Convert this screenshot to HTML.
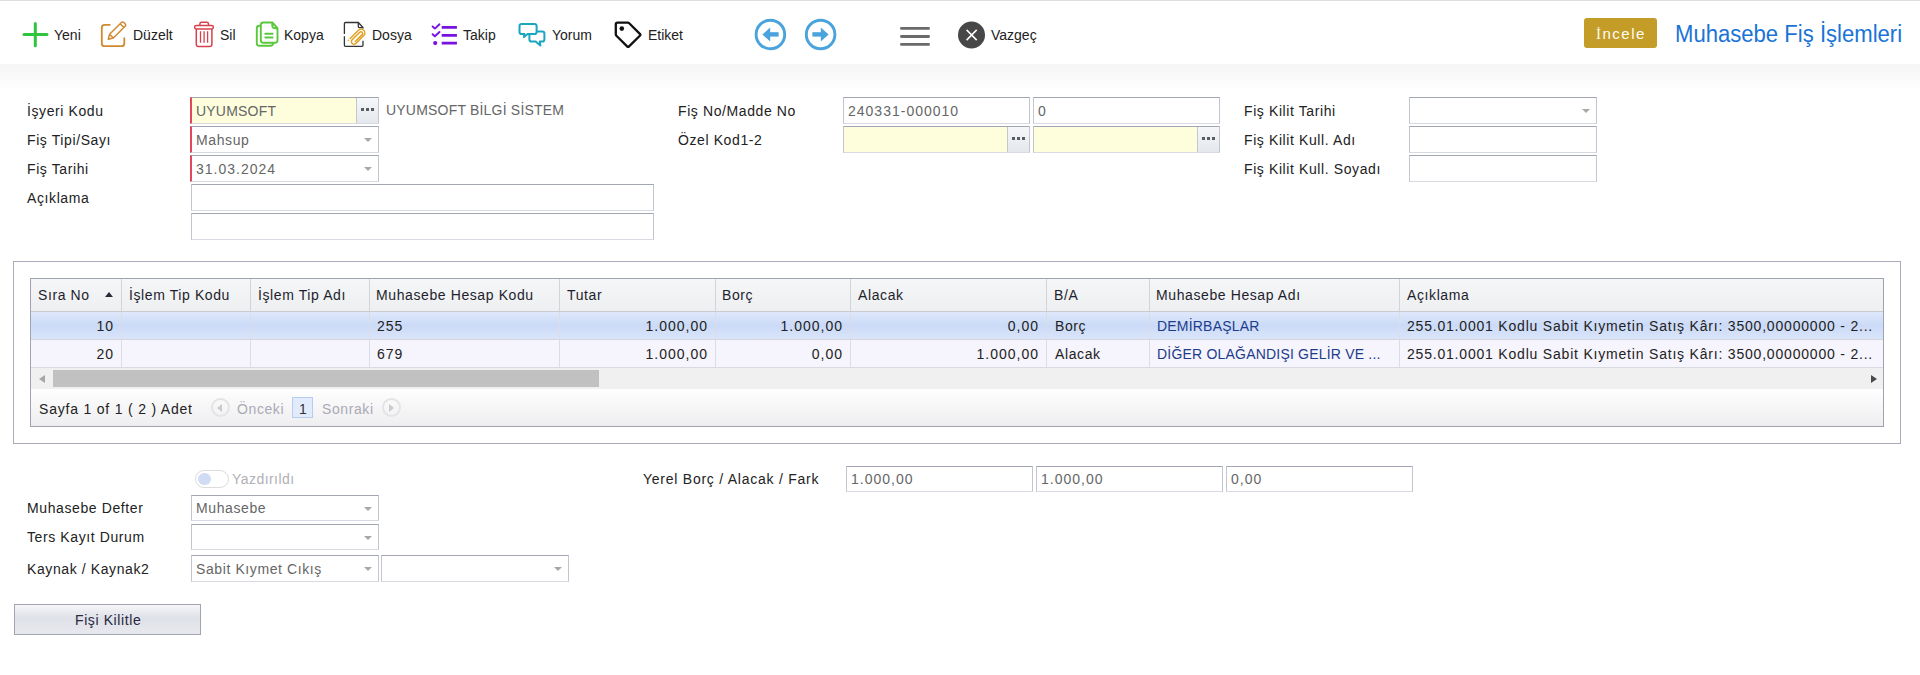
<!DOCTYPE html>
<html><head><meta charset="utf-8">
<style>
*{margin:0;padding:0}
html,body{width:1920px;height:675px;overflow:hidden;background:#fff}
body{position:relative;font-family:"Liberation Sans",sans-serif;font-size:13px;color:#222}
.a{position:absolute}
.t{position:absolute;line-height:14px;font-size:14px;white-space:nowrap;letter-spacing:.6px}
.num{letter-spacing:1px !important}
.n8{letter-spacing:.8px !important}
.up{letter-spacing:.2px !important}
.tb{position:absolute;line-height:14px;white-space:nowrap;font-size:14px;color:#222}
.box{position:absolute;box-sizing:border-box;height:27px;border:1px solid #c3c6d0;border-top-color:#a2a6b2;border-bottom-color:#d8dae2;background:#fff}
.req{border-left:2px solid #e2485a}
.yel{background:#fefedd}
.iv{position:absolute;left:4px;top:6px;line-height:14px;font-size:14px;color:#666;letter-spacing:.6px;white-space:nowrap}
.dd{position:absolute;right:6px;top:11px;width:0;height:0;border-left:4px solid transparent;border-right:4px solid transparent;border-top:4px solid #a8a8a8}
.btn3{position:absolute;right:0;top:0;bottom:0;width:21px;border-left:1px solid #c2c6ce;background:linear-gradient(#f5f7f9,#e5e8ec)}
.btn3 i{position:absolute;top:10px;width:3px;height:3px;background:#5a5d63}
.hd{top:288px;color:#1e1e2e}
.r1,.r2{color:#222}
.r1{top:319px}.r2{top:347px}
.vs{position:absolute;width:1px;background:#d2d4da}
</style></head><body>

<!-- toolbar -->
<div class="a" style="left:0;top:0;width:1920px;height:1px;background:#dde0dd"></div>
<div class="a" style="left:0;top:64px;width:1920px;height:26px;background:linear-gradient(#f5f5f5,#fff)"></div>

<svg class="a" style="left:0;top:0" width="1100" height="64" viewBox="0 0 1100 64" fill="none">
  <!-- plus -->
  <path d="M35.3 23.5V45.8M24 34.6H47" stroke="#2fc43b" stroke-width="3" stroke-linecap="round"/>
  <!-- duzelt -->
  <path d="M109.8 24.8H104.5Q101.8 24.8 101.8 27.5V43.4Q101.8 46.1 104.5 46.1H121.6Q124.3 46.1 124.3 43.4V38.1" stroke="#d18a31" stroke-width="1.8" stroke-linecap="round"/>
  <path d="M108.3 39.3L109.6 34.3L121.4 22.5Q122.6 21.3 123.8 22.5L125.1 23.8Q126.3 25 125.1 26.2L113.3 38L108.3 39.3ZM109.6 34.3L113.3 38M120.1 23.8L123.8 27.5" stroke="#d18a31" stroke-width="1.5" stroke-linejoin="round"/>
  <!-- sil -->
  <path d="M199.9 25.2V23.9Q199.9 22.3 201.5 22.3H206.9Q208.5 22.3 208.5 23.9V25.2" stroke="#d8414b" stroke-width="1.5"/>
  <rect x="194.6" y="25.5" width="18.8" height="3.4" rx="1.7" stroke="#d8414b" stroke-width="1.5"/>
  <path d="M196.3 29V44.2Q196.3 46.5 198.6 46.5H209.6Q211.9 46.5 211.9 44.2V29" stroke="#d8414b" stroke-width="1.5"/>
  <path d="M200.5 31.2V42.7M204.1 31.2V42.7M207.6 31.2V42.7" stroke="#d8414b" stroke-width="1.3"/>
  <!-- kopya -->
  <path d="M260.4 25.7H259.3Q256.8 25.7 256.8 28.2V43.3Q256.8 45.8 259.3 45.8H270.5Q273 45.8 273 43.3V42.8" stroke="#5ac73c" stroke-width="1.9"/>
  <path d="M272.3 22.5H263.3Q260.8 22.5 260.8 25V40.3Q260.8 42.8 263.3 42.8H275Q277.5 42.8 277.5 40.3V28.2L272.3 22.5ZM272.3 22.5V25.6Q272.3 28.2 274.8 28.2H277.5" stroke="#5ac73c" stroke-width="1.9" stroke-linejoin="round"/>
  <path d="M265.3 33.7H272.6M265.3 37.5H272.6" stroke="#5ac73c" stroke-width="1.9" stroke-linecap="round"/>
  <!-- dosya -->
  <path d="M344.4 34V23.6Q344.4 22.5 345.5 22.5H358.3L363 27.6V28.4M363 40.8V45.3Q363 46.4 361.9 46.4H345.5Q344.4 46.4 344.4 45.3V36.3M358.3 22.5V26.6Q358.3 27.6 359.3 27.6H363" stroke="#333" stroke-width="1.3"/>
  <path d="M350.2 38.5L358.45 30.25A3.77 3.77 0 0 1 363.78 35.58L355.88 43.48A2.6 2.6 0 0 1 352.2 39.8L359.75 32.25A1.7 1.7 0 0 1 362.15 34.65L355.3 41.5" stroke="#e2a11f" stroke-width="1.5" stroke-linecap="round"/>
  <circle cx="348.3" cy="40.3" r="0.8" fill="#e2a11f"/>
  <!-- takip -->
  <path d="M432.6 26.5L434.9 28.6L439.5 24.3M432.6 34.2L434.9 36.3L439.5 32" stroke="#7a12df" stroke-width="1.9" stroke-linecap="round" stroke-linejoin="round"/>
  <circle cx="435.2" cy="43.1" r="2.1" fill="#7a12df"/>
  <path d="M441.7 27.4H456.9M441.7 35.4H456.9M441.7 43.1H456.9" stroke="#7a12df" stroke-width="2.9" stroke-linecap="butt"/>
  <!-- yorum -->
  <path d="M521.6 23.9H534.5Q536.6 23.9 536.6 26V31.9Q536.6 34 534.5 34H527.6L523.9 37.1L524.4 34H521.6Q519.5 34 519.5 31.9V26Q519.5 23.9 521.6 23.9Z" stroke="#1aa6be" stroke-width="2" stroke-linejoin="round"/>
  <path d="M536.9 31.5H542.3Q544.4 31.5 544.4 33.6V39.5Q544.4 41.6 542.3 41.6H539.8L540.4 45.6L535.6 41.6H531.5Q529.4 41.6 529.4 39.5V34.8" stroke="#1aa6be" stroke-width="2" stroke-linejoin="round"/>
  <!-- etiket -->
  <path d="M617.5 22.6H627.7Q628.6 22.6 629.2 23.2L640.1 34.1Q640.8 34.8 640.1 35.5L628.8 46.6Q628.1 47.3 627.4 46.6L616.4 35.8Q615.8 35.2 615.8 34.3V24.3Q615.8 22.6 617.5 22.6Z" stroke="#111" stroke-width="2.3" stroke-linejoin="round"/>
  <circle cx="621.8" cy="28.6" r="2.3" fill="#111"/>
  <!-- arrows -->
  <circle cx="770.4" cy="34.5" r="14.3" stroke="#4aa3dc" stroke-width="2.9"/>
  <path d="M762.4 34.4L770.2 27.4V41.6Z" fill="#4aa3dc"/>
  <path d="M769 34.4H778.6" stroke="#4aa3dc" stroke-width="4.4"/>
  <circle cx="820.6" cy="34.5" r="14.3" stroke="#4aa3dc" stroke-width="2.9"/>
  <path d="M828.6 34.4L820.8 27.4V41.6Z" fill="#4aa3dc"/>
  <path d="M812.4 34.4H822" stroke="#4aa3dc" stroke-width="4.4"/>
  <!-- hamburger -->
  <path d="M901.4 28.4H928.6M901.4 36.5H928.6M901.4 44.4H928.6" stroke="#6b6b6b" stroke-width="2.8" stroke-linecap="round"/>
  <!-- vazgec -->
  <circle cx="971.5" cy="35" r="13.5" fill="#474747"/>
  <path d="M966.6 29.9L976.7 40.1M976.7 29.9L966.6 40.1" stroke="#fff" stroke-width="1.5"/>
</svg>

<div class="tb" style="left:54px;top:28px">Yeni</div>
<div class="tb" style="left:133px;top:28px">Düzelt</div>
<div class="tb" style="left:220px;top:28px">Sil</div>
<div class="tb" style="left:284px;top:28px">Kopya</div>
<div class="tb" style="left:372px;top:28px">Dosya</div>
<div class="tb" style="left:463px;top:28px">Takip</div>
<div class="tb" style="left:552px;top:28px">Yorum</div>
<div class="tb" style="left:648px;top:28px">Etiket</div>
<div class="tb" style="left:991px;top:28px">Vazgeç</div>

<div class="a" style="left:1584px;top:18px;width:73px;height:30px;background:#c49c28;border-radius:3px"></div>
<div class="t" style="left:1596px;top:26px;color:#fffdf5;font-size:15px;line-height:15px;letter-spacing:1.5px"><span style="font-family:'Liberation Serif';font-size:15px">İ</span>ncele</div>
<div class="a" style="left:1675px;top:22px;font-size:23.5px;line-height:24px;color:#1a74d6;white-space:nowrap;transform:scaleX(0.94);transform-origin:0 0">Muhasebe Fiş İşlemleri</div>


<!-- form col1 -->
<div class="t" style="left:27px;top:104px">İşyeri Kodu</div>
<div class="t" style="left:27px;top:133px">Fiş Tipi/Sayı</div>
<div class="t" style="left:27px;top:162px">Fiş Tarihi</div>
<div class="t" style="left:27px;top:191px">Açıklama</div>

<div class="box req yel" style="left:190px;top:97px;width:189px"><div class="iv up">UYUMSOFT</div><div class="btn3"><i style="left:4px"></i><i style="left:9px"></i><i style="left:14px"></i></div></div>
<div class="t up" style="left:386px;top:103px;color:#666">UYUMSOFT BİLGİ SİSTEM</div>
<div class="box req" style="left:190px;top:126px;width:189px"><div class="iv">Mahsup</div><div class="dd"></div></div>
<div class="box req" style="left:190px;top:155px;width:189px"><div class="iv num">31.03.2024</div><div class="dd"></div></div>
<div class="box" style="left:191px;top:184px;width:463px"></div>
<div class="box" style="left:191px;top:213px;width:463px"></div>

<!-- form col2 -->
<div class="t" style="left:678px;top:104px">Fiş No/Madde No</div>
<div class="t" style="left:678px;top:133px">Özel Kod1-2</div>
<div class="box" style="left:843px;top:97px;width:187px"><div class="iv num">240331-000010</div></div>
<div class="box" style="left:1033px;top:97px;width:187px"><div class="iv">0</div></div>
<div class="box yel" style="left:843px;top:126px;width:187px"><div class="btn3"><i style="left:4px"></i><i style="left:9px"></i><i style="left:14px"></i></div></div>
<div class="box yel" style="left:1033px;top:126px;width:187px"><div class="btn3"><i style="left:4px"></i><i style="left:9px"></i><i style="left:14px"></i></div></div>

<!-- form col3 -->
<div class="t" style="left:1244px;top:104px">Fiş Kilit Tarihi</div>
<div class="t" style="left:1244px;top:133px">Fiş Kilit Kull. Adı</div>
<div class="t" style="left:1244px;top:162px">Fiş Kilit Kull. Soyadı</div>
<div class="box" style="left:1409px;top:97px;width:188px"><div class="dd"></div></div>
<div class="box" style="left:1409px;top:126px;width:188px"></div>
<div class="box" style="left:1409px;top:155px;width:188px"></div>


<!-- grid -->
<div class="a" style="left:13px;top:261px;width:1886px;height:181px;border:1px solid #a9acb8"></div>
<div class="a" style="left:30px;top:278px;width:1852px;height:147px;border:1px solid #9fa2af;overflow:hidden">
  <div class="a" style="left:0;top:0;width:1852px;height:32px;background:linear-gradient(#f5f6f7,#eeeff0);border-bottom:1px solid #c9cbd0"></div>
  <div class="a" style="left:0;top:33px;width:1852px;height:27px;background:linear-gradient(#dfe8fb,#cbdaf7 50%,#dae5fa);border-bottom:1px solid #d3d6de"></div>
  <div class="a" style="left:0;top:61px;width:1852px;height:27px;background:#f6f4fc;border-bottom:1px solid #d8dae0"></div>
  <div class="a" style="left:0;top:89px;width:1852px;height:21px;background:#f0f0f0"></div>
  <div class="a" style="left:22px;top:91px;width:546px;height:17px;background:#c1c1c1"></div>
  <div class="a" style="left:8px;top:96px;width:0;height:0;border-top:4.5px solid transparent;border-bottom:4.5px solid transparent;border-right:6px solid #a6a6a6"></div>
  <div class="a" style="left:1840px;top:96px;width:0;height:0;border-top:4.5px solid transparent;border-bottom:4.5px solid transparent;border-left:6px solid #4a4a4a"></div>
  <div class="a" style="left:0;top:110px;width:1852px;height:37px;background:linear-gradient(#fefefe,#eeeef0)"></div>
  <div class="vs" style="left:90px;top:0;height:32px;background:#d3d4d8"></div>
  <div class="vs" style="left:90px;top:33px;height:55px;background:#dcdde4"></div>
  <div class="vs" style="left:219px;top:0;height:32px;background:#d3d4d8"></div>
  <div class="vs" style="left:219px;top:33px;height:55px;background:#dcdde4"></div>
  <div class="vs" style="left:338px;top:0;height:32px;background:#d3d4d8"></div>
  <div class="vs" style="left:338px;top:33px;height:55px;background:#dcdde4"></div>
  <div class="vs" style="left:528px;top:0;height:32px;background:#d3d4d8"></div>
  <div class="vs" style="left:528px;top:33px;height:55px;background:#dcdde4"></div>
  <div class="vs" style="left:684px;top:0;height:32px;background:#d3d4d8"></div>
  <div class="vs" style="left:684px;top:33px;height:55px;background:#dcdde4"></div>
  <div class="vs" style="left:819px;top:0;height:32px;background:#d3d4d8"></div>
  <div class="vs" style="left:819px;top:33px;height:55px;background:#dcdde4"></div>
  <div class="vs" style="left:1015px;top:0;height:32px;background:#d3d4d8"></div>
  <div class="vs" style="left:1015px;top:33px;height:55px;background:#dcdde4"></div>
  <div class="vs" style="left:1118px;top:0;height:32px;background:#d3d4d8"></div>
  <div class="vs" style="left:1118px;top:33px;height:55px;background:#dcdde4"></div>
  <div class="vs" style="left:1368px;top:0;height:32px;background:#d3d4d8"></div>
  <div class="vs" style="left:1368px;top:33px;height:55px;background:#dcdde4"></div>
</div>
<div class="t hd" style="left:38px">Sıra No</div>
<div class="t hd" style="left:129px">İşlem Tip Kodu</div>
<div class="t hd" style="left:258px">İşlem Tip Adı</div>
<div class="t hd" style="left:376px">Muhasebe Hesap Kodu</div>
<div class="t hd" style="left:567px">Tutar</div>
<div class="t hd" style="left:722px">Borç</div>
<div class="t hd" style="left:858px">Alacak</div>
<div class="t hd" style="left:1054px">B/A</div>
<div class="t hd" style="left:1156px">Muhasebe Hesap Adı</div>
<div class="t hd" style="left:1407px">Açıklama</div>
<div class="a" style="left:105px;top:292px;width:0;height:0;border-left:4.5px solid transparent;border-right:4.5px solid transparent;border-bottom:5px solid #2a2a35"></div>
<div class="t r1 num" style="right:1806px;text-align:right">10</div>
<div class="t r1 num" style="left:377px;">255</div>
<div class="t r1 num" style="right:1212px;text-align:right">1.000,00</div>
<div class="t r1 num" style="right:1077px;text-align:right">1.000,00</div>
<div class="t r1 num" style="right:881px;text-align:right">0,00</div>
<div class="t r1 " style="left:1055px;">Borç</div>
<div class="t r1 up" style="left:1157px;color:#1c3c8c">DEMİRBAŞLAR</div>
<div class="t r1 n8" style="left:1407px;">255.01.0001 Kodlu Sabit Kıymetin Satış Kârı: 3500,00000000 - 2...</div>
<div class="t r2 num" style="right:1806px;text-align:right">20</div>
<div class="t r2 num" style="left:377px;">679</div>
<div class="t r2 num" style="right:1212px;text-align:right">1.000,00</div>
<div class="t r2 num" style="right:1077px;text-align:right">0,00</div>
<div class="t r2 num" style="right:881px;text-align:right">1.000,00</div>
<div class="t r2 " style="left:1055px;">Alacak</div>
<div class="t r2 up" style="left:1157px;color:#1c3c8c">DİĞER OLAĞANDIŞI GELİR VE ...</div>
<div class="t r2 n8" style="left:1407px;">255.01.0001 Kodlu Sabit Kıymetin Satış Kârı: 3500,00000000 - 2...</div>
<div class="t pg n8" style="left:39px;top:402px;color:#222">Sayfa 1 of 1 ( 2 ) Adet</div>
<div class="a" style="left:211px;top:398px;width:19px;height:19px;box-sizing:border-box;border:2px solid #e4e4e6;border-radius:50%"></div>
<div class="a" style="left:217px;top:404px;width:0;height:0;border-top:4px solid transparent;border-bottom:4px solid transparent;border-right:5px solid #cbcbcf"></div>
<div class="t" style="left:237px;top:402px;color:#aaaab6">Önceki</div>
<div class="a" style="left:292px;top:397px;width:21px;height:21px;box-sizing:border-box;border:1px solid #b4cdf0;background:#e2ebfc"></div>
<div class="t num" style="left:299px;top:402px;color:#333">1</div>
<div class="t" style="left:322px;top:402px;color:#aaaab6">Sonraki</div>
<div class="a" style="left:382px;top:398px;width:19px;height:19px;box-sizing:border-box;border:2px solid #e4e4e6;border-radius:50%"></div>
<div class="a" style="left:389px;top:404px;width:0;height:0;border-top:4px solid transparent;border-bottom:4px solid transparent;border-left:5px solid #cbcbcf"></div>

<!-- bottom form -->
<div class="a" style="left:195px;top:470px;width:34px;height:18px;box-sizing:border-box;border:1px solid #dcdcdc;border-radius:9px;background:#fff"></div>
<div class="a" style="left:198px;top:473px;width:12.5px;height:12px;border-radius:50%;background:#cfdcf3"></div>
<div class="t" style="left:232px;top:472px;color:#b0b0b6;letter-spacing:.45px">Yazdırıldı</div>
<div class="t" style="left:643px;top:472px;letter-spacing:.75px">Yerel Borç / Alacak / Fark</div>
<div class="box" style="left:846px;top:466px;width:187px;height:26px"><div style="top:5px" class="iv num">1.000,00</div></div>
<div class="box" style="left:1036px;top:466px;width:187px;height:26px"><div style="top:5px" class="iv num">1.000,00</div></div>
<div class="box" style="left:1226px;top:466px;width:187px;height:26px"><div style="top:5px" class="iv num">0,00</div></div>

<div class="t" style="left:27px;top:501px">Muhasebe Defter</div>
<div class="t" style="left:27px;top:530px">Ters Kayıt Durum</div>
<div class="t" style="left:27px;top:562px">Kaynak / Kaynak2</div>
<div class="box" style="left:191px;top:495px;width:188px;height:26px"><div style="top:5px" class="iv">Muhasebe</div><div class="dd"></div></div>
<div class="box" style="left:191px;top:524px;width:188px;height:26px"><div class="dd"></div></div>
<div class="box" style="left:191px;top:555px;width:188px;height:27px"><div class="iv">Sabit Kıymet Cıkış</div><div class="dd"></div></div>
<div class="box" style="left:381px;top:555px;width:188px;height:27px"><div class="dd"></div></div>

<div class="a" style="left:14px;top:604px;width:187px;height:31px;box-sizing:border-box;border:1px solid #a2a4b2;background:linear-gradient(#f6f6f9,#dfe1e8 45%,#e8e9ee)"></div>
<div class="t" style="left:75px;top:613px;color:#28283e">Fişi Kilitle</div>

</body></html>
